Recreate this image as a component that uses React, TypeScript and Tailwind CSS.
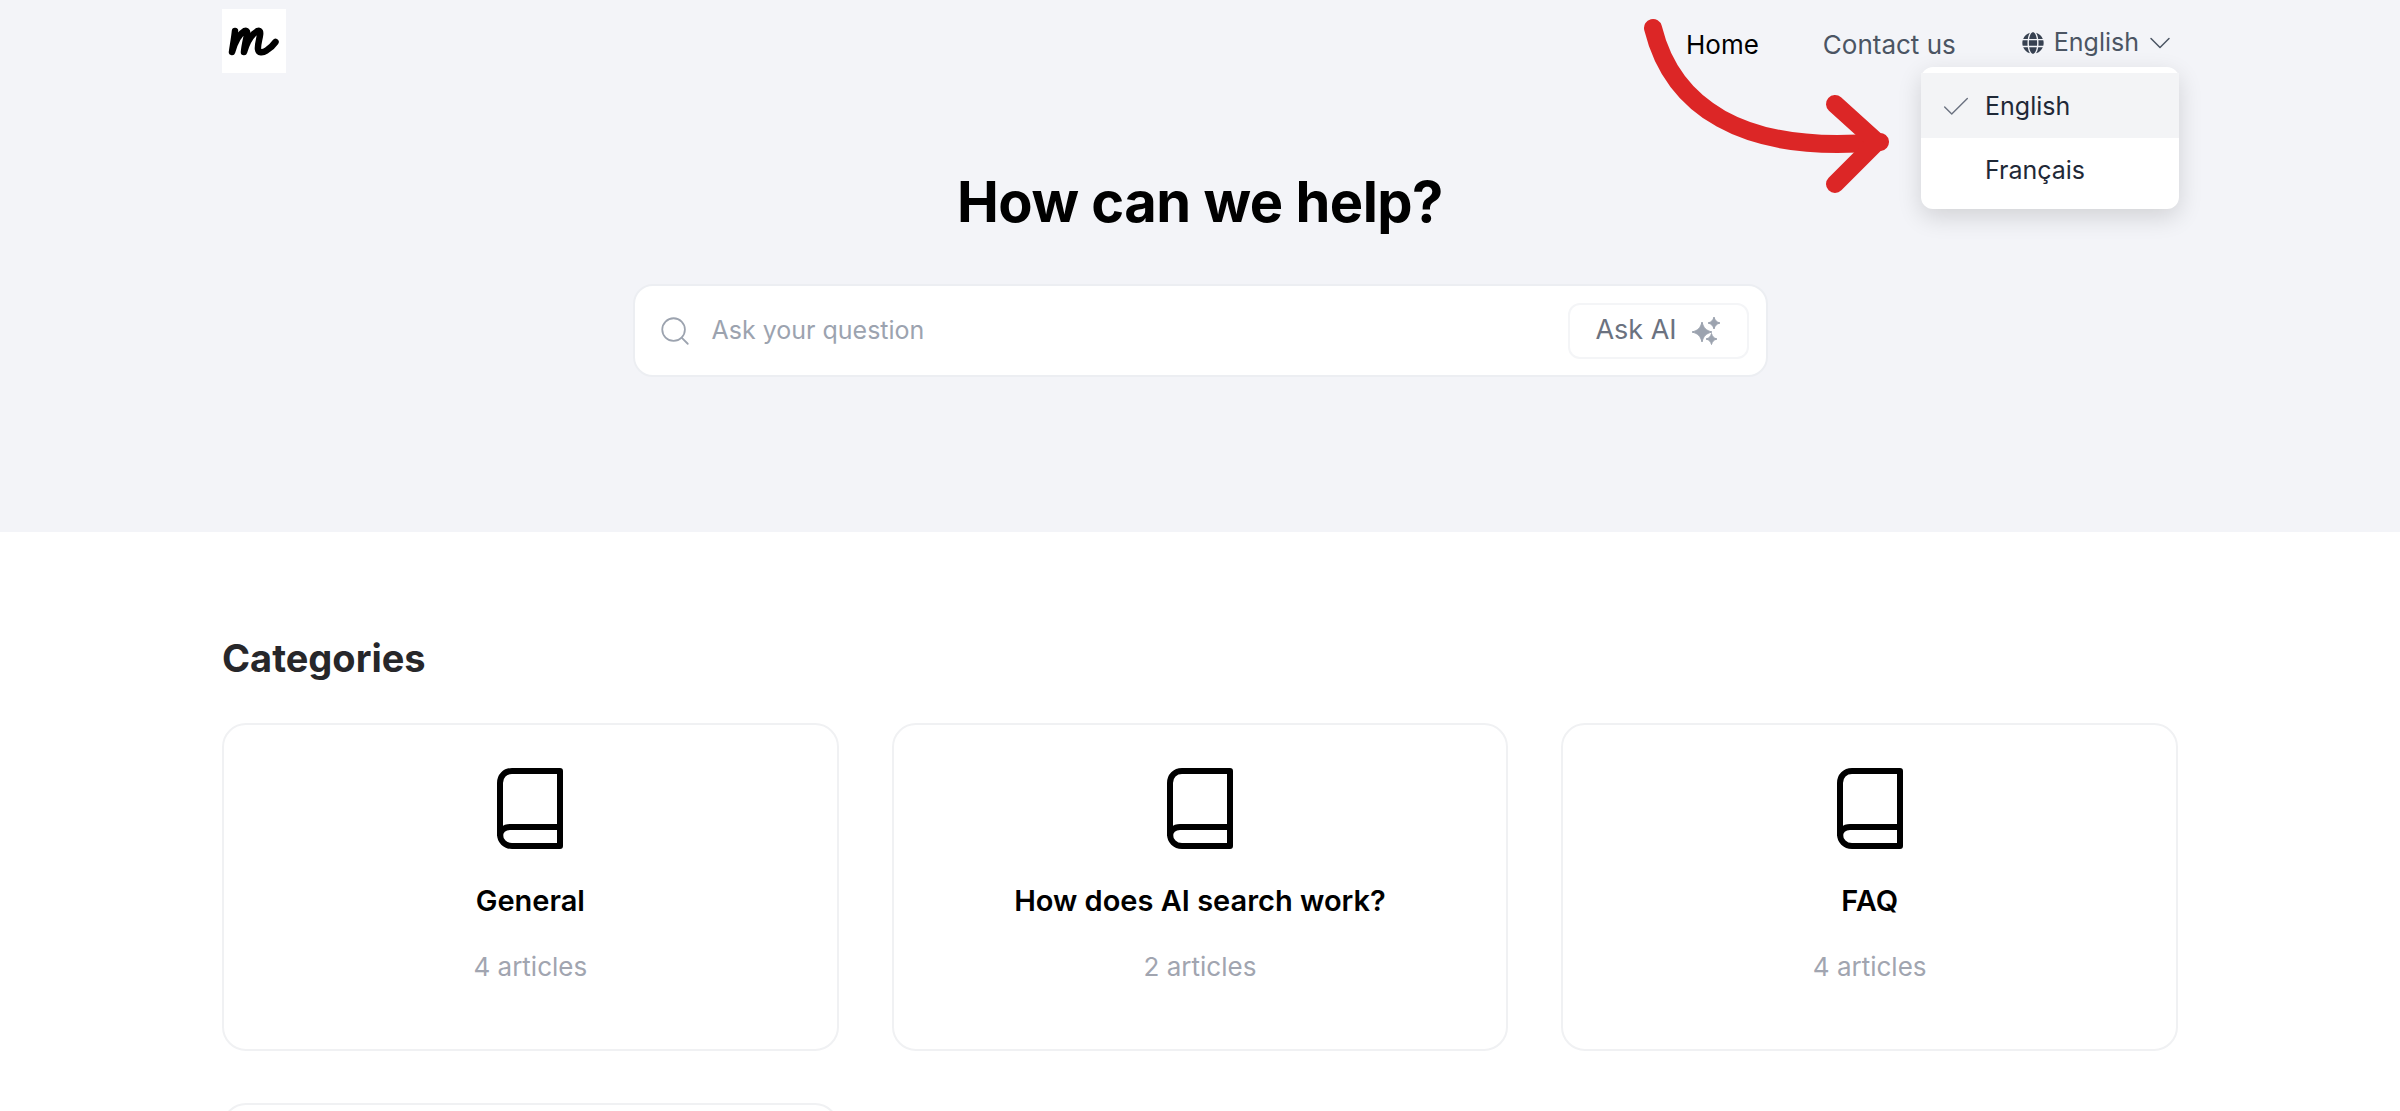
import { Check, ChevronDown, Search } from "lucide-react";
import { FaGlobe } from "react-icons/fa";

const categories = [
  { title: "General", count: "4 articles" },
  { title: "How does AI search work?", count: "2 articles" },
  { title: "FAQ", count: "4 articles" },
];

const BookIcon = () => (
  <svg width="66" height="81" viewBox="0 0 66 81" fill="none" stroke="#000" strokeWidth="6" strokeLinejoin="round">
    <path d="M63 3H15C8 3 3 8 3 15V66C3 73 8 78 15 78H63V3Z" />
    <path d="M63 59H13C7 59 3 63 3 68" />
  </svg>
);

const Sparkles = () => (
  <svg width="30" height="28" viewBox="0 0 30 28" fill="#9ca3af" stroke="#9ca3af" strokeWidth="1" strokeLinejoin="round">
    <path d="M11 5C12.500 11 15 13.500 21 15C15 16.500 12.500 19 11 25C9.500 19 7 16.500 1 15C7 13.500 9.500 11 11 5Z" />
    <path d="M23 0C24 3.500 25.500 5 29 6C25.500 7 24 8.500 23 12C22 8.500 20.500 7 17 6C20.500 5 22 3.500 23 0Z" />
    <path d="M20.500 16.500C21.300 19.500 22.500 21 26 22C22.500 23 21.300 24.500 20.500 27.500C19.700 24.500 18.500 23 15 22C18.500 21 19.700 19.500 20.500 16.500Z" />
  </svg>
);

const Logo = () => (
  <div className="w-16 h-16 bg-white flex items-center justify-center">
    <svg width="52" height="32" viewBox="0 0 52 32" fill="none" stroke="#000" strokeLinecap="round" strokeLinejoin="round">
      <path
        d="M7 6C6.500 12 5 20 4 27C7 17 11 9 16.500 6C19 5 19.500 7 19 10C18 15 16.500 21 16 27C19 17 24 9 29.500 6C32 5 32.500 7 32 10C31.500 14 29.500 20 30 24C30.500 28 34.500 28 38.500 25.500C42 23.500 45 20.500 47.500 17"
        strokeWidth="6.500"
      />
    </svg>
  </div>
);

export default function App() {
  return (
    <div className="relative h-screen overflow-hidden bg-white font-['Inter',sans-serif]">
      <section className="h-[532px] bg-[#f3f4f8]">
        <div className="w-[1956px] mx-auto">
          <header className="flex items-start justify-between pt-[9px]">
            <Logo />
            <nav className="flex items-center text-[26px] pt-4">
              <span className="text-black mr-[64px]">Home</span>
              <span className="text-[#4b5563] mr-[66px]">Contact us</span>
              <span className="flex items-center text-[25px] text-[#4b5563] -mt-1">
                <FaGlobe className="w-[22px] h-[22px] mr-[10px] text-[#374151]" />
                English
                <ChevronDown className="w-9 h-9 ml-[3px]" strokeWidth={1} />
              </span>
            </nav>
          </header>

          <h1 className="mt-[93px] text-center text-[56px] leading-[72px] font-bold tracking-[-0.5px] text-black">How can we help?</h1>

          <div className="mt-[46px] mx-auto w-[1135px] h-[93px] flex items-center bg-white border-2 border-[#eceef2] rounded-[20px] pl-[23px] pr-[17px]">
            <Search className="w-[34px] h-[34px] text-[#9ca3af]" strokeWidth={1.25} />
            <span className="ml-[20px] text-[25px] text-[#9ca3af]">Ask your question</span>
            <button className="ml-auto w-[181px] h-[56px] flex items-center justify-center gap-[14px] border-2 border-[#f4f5f7] rounded-xl text-[27px] text-[#6b7280]">
              Ask AI
              <Sparkles />
            </button>
          </div>
        </div>
      </section>

      <main className="w-[1956px] mx-auto">
        <h2 className="mt-[103px] text-[38px] leading-[46px] font-bold text-[#27272a]">Categories</h2>
        <div className="mt-[42px] grid grid-cols-3 gap-x-[53px] gap-y-[52px]">
          {categories.map((c) => (
            <div key={c.title} className="h-[328px] flex flex-col items-center border-2 border-[#f0f1f3] rounded-[24px] pt-[43px]">
              <BookIcon />
              <h3 className="mt-[34px] text-[29px] leading-[36px] font-semibold text-black">{c.title}</h3>
              <p className="mt-[30px] text-[26px] leading-[36px] text-[#a1a5b0]">{c.count}</p>
            </div>
          ))}
          <div className="h-[328px] border-2 border-[#f0f1f3] rounded-[24px]" />
        </div>
      </main>

      <div className="absolute left-[1921px] top-[67px] w-[258px] h-[142px] bg-white rounded-xl shadow-[0_8px_24px_rgba(0,0,0,0.14)] py-[6px] text-[25px] text-[#1f2937]">
        <div className="h-[65px] bg-[#f3f4f6] flex items-center relative pl-[64px] pt-[2px]">
          <Check className="absolute left-[18px] w-[34px] h-[34px] text-[#6b7280]" strokeWidth={1} />
          English
        </div>
        <div className="h-[64px] flex items-center pl-[64px] pt-[2px]">Français</div>
      </div>

      <svg className="absolute left-[1640px] top-[10px]" width="260" height="200" viewBox="1640 10 260 200" fill="none" stroke="#dc2626" strokeWidth="18" strokeLinecap="round" strokeLinejoin="round">
        <path d="M1653 28C1672 105 1740 155 1880 142" />
        <path d="M1835 104L1877 142V142L1835 184" />
      </svg>
    </div>
  );
}
